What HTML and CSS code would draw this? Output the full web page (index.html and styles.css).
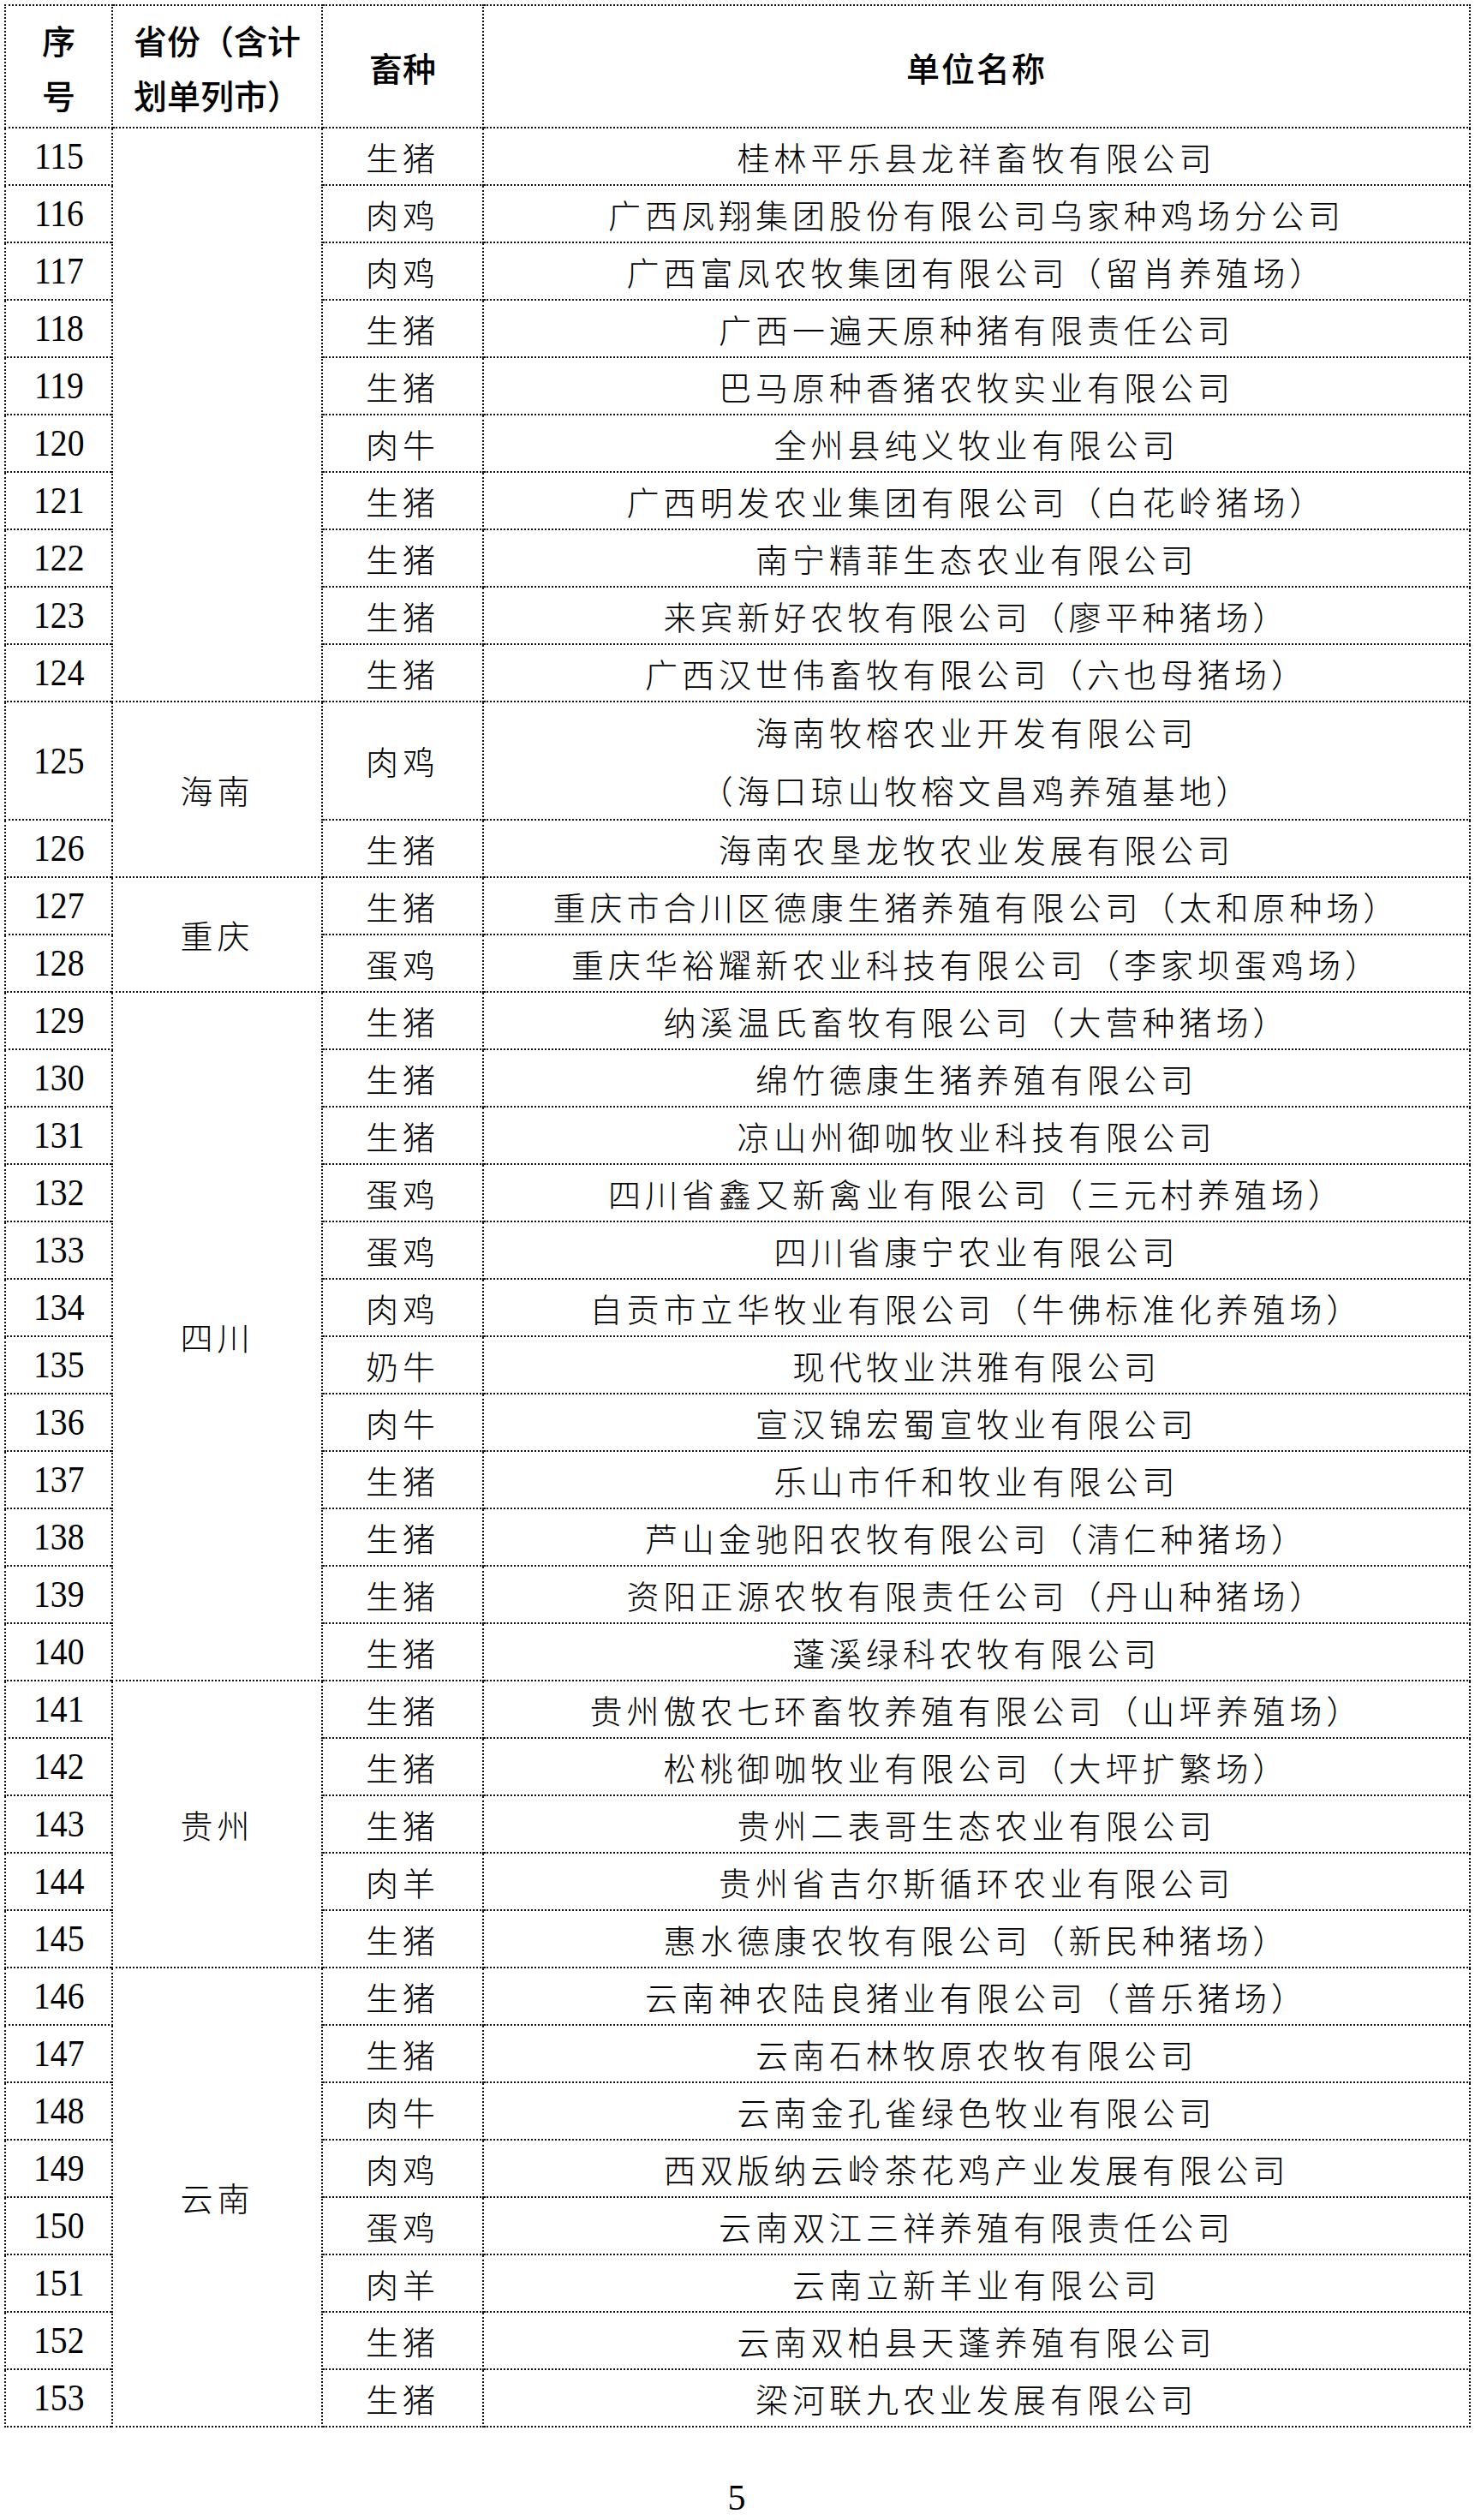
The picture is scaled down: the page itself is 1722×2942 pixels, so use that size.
FILE: index.html
```html
<!DOCTYPE html>
<html lang="zh-CN">
<head>
<meta charset="utf-8">
<title>名单</title>
<link rel="stylesheet" href="styles.css">
</head>
<body>
<div class="page">
<table class="list">
<colgroup>
<col class="c-no"><col class="c-prov"><col class="c-kind"><col class="c-name">
</colgroup>
<thead>
<tr class="head">
<th class="h-no">序<br>号</th>
<th class="h-prov">省份（含计<br>划单列市）</th>
<th class="h-kind">畜种</th>
<th class="h-name">单位名称</th>
</tr>
</thead>
<tbody>
<tr><td class="no"><span>115</span></td><td class="prov" rowspan="10"></td><td class="kind">生猪</td><td class="name">桂林平乐县龙祥畜牧有限公司</td></tr>
<tr><td class="no"><span>116</span></td><td class="kind">肉鸡</td><td class="name">广西凤翔集团股份有限公司乌家种鸡场分公司</td></tr>
<tr><td class="no"><span>117</span></td><td class="kind">肉鸡</td><td class="name">广西富凤农牧集团有限公司（留肖养殖场）</td></tr>
<tr><td class="no"><span>118</span></td><td class="kind">生猪</td><td class="name">广西一遍天原种猪有限责任公司</td></tr>
<tr><td class="no"><span>119</span></td><td class="kind">生猪</td><td class="name">巴马原种香猪农牧实业有限公司</td></tr>
<tr><td class="no"><span>120</span></td><td class="kind">肉牛</td><td class="name">全州县纯义牧业有限公司</td></tr>
<tr><td class="no"><span>121</span></td><td class="kind">生猪</td><td class="name">广西明发农业集团有限公司（白花岭猪场）</td></tr>
<tr><td class="no"><span>122</span></td><td class="kind">生猪</td><td class="name">南宁精菲生态农业有限公司</td></tr>
<tr><td class="no"><span>123</span></td><td class="kind">生猪</td><td class="name">来宾新好农牧有限公司（廖平种猪场）</td></tr>
<tr><td class="no"><span>124</span></td><td class="kind">生猪</td><td class="name">广西汉世伟畜牧有限公司（六也母猪场）</td></tr>
<tr class="tall"><td class="no"><span>125</span></td><td class="prov" rowspan="2">海南</td><td class="kind">肉鸡</td><td class="name two">海南牧榕农业开发有限公司<br>（海口琼山牧榕文昌鸡养殖基地）</td></tr>
<tr><td class="no"><span>126</span></td><td class="kind">生猪</td><td class="name">海南农垦龙牧农业发展有限公司</td></tr>
<tr><td class="no"><span>127</span></td><td class="prov" rowspan="2">重庆</td><td class="kind">生猪</td><td class="name">重庆市合川区德康生猪养殖有限公司（太和原种场）</td></tr>
<tr><td class="no"><span>128</span></td><td class="kind">蛋鸡</td><td class="name">重庆华裕耀新农业科技有限公司（李家坝蛋鸡场）</td></tr>
<tr><td class="no"><span>129</span></td><td class="prov" rowspan="12">四川</td><td class="kind">生猪</td><td class="name">纳溪温氏畜牧有限公司（大营种猪场）</td></tr>
<tr><td class="no"><span>130</span></td><td class="kind">生猪</td><td class="name">绵竹德康生猪养殖有限公司</td></tr>
<tr><td class="no"><span>131</span></td><td class="kind">生猪</td><td class="name">凉山州御咖牧业科技有限公司</td></tr>
<tr><td class="no"><span>132</span></td><td class="kind">蛋鸡</td><td class="name">四川省鑫又新禽业有限公司（三元村养殖场）</td></tr>
<tr><td class="no"><span>133</span></td><td class="kind">蛋鸡</td><td class="name">四川省康宁农业有限公司</td></tr>
<tr><td class="no"><span>134</span></td><td class="kind">肉鸡</td><td class="name">自贡市立华牧业有限公司（牛佛标准化养殖场）</td></tr>
<tr><td class="no"><span>135</span></td><td class="kind">奶牛</td><td class="name">现代牧业洪雅有限公司</td></tr>
<tr><td class="no"><span>136</span></td><td class="kind">肉牛</td><td class="name">宣汉锦宏蜀宣牧业有限公司</td></tr>
<tr><td class="no"><span>137</span></td><td class="kind">生猪</td><td class="name">乐山市仟和牧业有限公司</td></tr>
<tr><td class="no"><span>138</span></td><td class="kind">生猪</td><td class="name">芦山金驰阳农牧有限公司（清仁种猪场）</td></tr>
<tr><td class="no"><span>139</span></td><td class="kind">生猪</td><td class="name">资阳正源农牧有限责任公司（丹山种猪场）</td></tr>
<tr><td class="no"><span>140</span></td><td class="kind">生猪</td><td class="name">蓬溪绿科农牧有限公司</td></tr>
<tr><td class="no"><span>141</span></td><td class="prov" rowspan="5">贵州</td><td class="kind">生猪</td><td class="name">贵州傲农七环畜牧养殖有限公司（山坪养殖场）</td></tr>
<tr><td class="no"><span>142</span></td><td class="kind">生猪</td><td class="name">松桃御咖牧业有限公司（大坪扩繁场）</td></tr>
<tr><td class="no"><span>143</span></td><td class="kind">生猪</td><td class="name">贵州二表哥生态农业有限公司</td></tr>
<tr><td class="no"><span>144</span></td><td class="kind">肉羊</td><td class="name">贵州省吉尔斯循环农业有限公司</td></tr>
<tr><td class="no"><span>145</span></td><td class="kind">生猪</td><td class="name">惠水德康农牧有限公司（新民种猪场）</td></tr>
<tr><td class="no"><span>146</span></td><td class="prov" rowspan="8">云南</td><td class="kind">生猪</td><td class="name">云南神农陆良猪业有限公司（普乐猪场）</td></tr>
<tr><td class="no"><span>147</span></td><td class="kind">生猪</td><td class="name">云南石林牧原农牧有限公司</td></tr>
<tr><td class="no"><span>148</span></td><td class="kind">肉牛</td><td class="name">云南金孔雀绿色牧业有限公司</td></tr>
<tr><td class="no"><span>149</span></td><td class="kind">肉鸡</td><td class="name">西双版纳云岭茶花鸡产业发展有限公司</td></tr>
<tr><td class="no"><span>150</span></td><td class="kind">蛋鸡</td><td class="name">云南双江三祥养殖有限责任公司</td></tr>
<tr><td class="no"><span>151</span></td><td class="kind">肉羊</td><td class="name">云南立新羊业有限公司</td></tr>
<tr><td class="no"><span>152</span></td><td class="kind">生猪</td><td class="name">云南双柏县天蓬养殖有限公司</td></tr>
<tr><td class="no"><span>153</span></td><td class="kind">生猪</td><td class="name">梁河联九农业发展有限公司</td></tr>
</tbody>
</table>
<div class="pagenum">5</div>
</div>
</body>
</html>
```

FILE: styles.css
```css
html, body {
  margin: 0;
  padding: 0;
  background: #fff;
  color: #000;
}

.page {
  padding: 5px 7px 0 5px;
  font-family: "Noto Sans CJK SC", "Noto Sans", sans-serif;
}

.list {
  border-collapse: collapse;
  table-layout: fixed;
  width: 1710px;
}

.c-no { width: 125px; }
.c-prov { width: 245px; }
.c-kind { width: 188px; }
.c-name { width: 1152px; }

.list th,
.list td {
  border: 2px dotted #111;
  padding: 0;
  text-align: center;
  vertical-align: middle;
}

.head {
  height: 143px;
}

.list th {
  font-family: "Noto Sans CJK SC", sans-serif;
  font-weight: 500;
  font-size: 39px;
  line-height: 64px;
}

.h-name {
  letter-spacing: 2px;
  padding-left: 2px;
}

.list tbody tr {
  height: 67px;
}

.list tbody tr.tall {
  height: 134px;
}

.no {
  font-family: "Liberation Serif", "Times New Roman", serif;
  font-size: 45px;
  line-height: 1;
}

.no span {
  display: inline-block;
  transform: scaleX(0.88);
}

.prov,
.kind,
.name {
  font-family: "Noto Sans CJK SC", sans-serif;
  font-weight: 300;
  font-size: 38px;
  letter-spacing: 5px;
  padding-left: 5px;
  line-height: 1.2;
}

.name.two {
  line-height: 68px;
}

.pagenum {
  font-family: "Liberation Serif", "Times New Roman", serif;
  font-size: 42px;
  text-align: center;
  margin-top: 61px;
  line-height: 1;
}
```
